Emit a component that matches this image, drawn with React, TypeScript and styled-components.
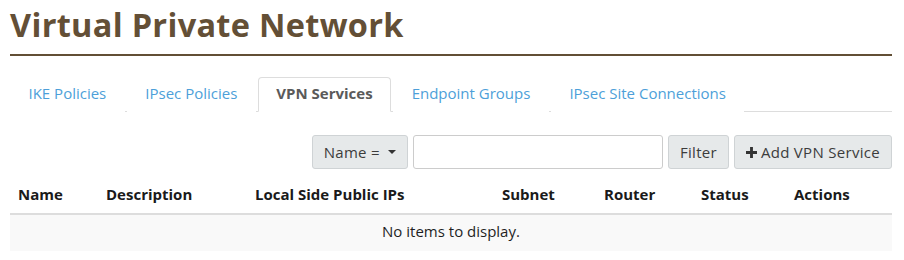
import React from "react";
import styled, { createGlobalStyle } from "styled-components";

const GlobalStyle = createGlobalStyle`
  body {
    margin: 0;
    background: #fff;
    font-family: "Open Sans", "DejaVu Sans", sans-serif;
    color: #1f1f1f;
  }
`;

const tabs = [
  "IKE Policies",
  "IPsec Policies",
  "VPN Services",
  "Endpoint Groups",
  "IPsec Site Connections",
];

const columns = [
  { label: "Name", width: 88 },
  { label: "Description", width: 149 },
  { label: "Local Side Public IPs", width: 247 },
  { label: "Subnet", width: 102 },
  { label: "Router", width: 97 },
  { label: "Status", width: 93 },
  { label: "Actions", width: 106 },
];

const App: React.FC = () => (
  <Page>
    <GlobalStyle />
    <Header>
      <Title>Virtual Private Network</Title>
    </Header>
    <TabList>
      {tabs.map((tab) => (
        <Tab key={tab} $active={tab === "VPN Services"}>
          {tab}
        </Tab>
      ))}
    </TabList>
    <Toolbar>
      <ToolButton type="button">
        Name = <Caret />
      </ToolButton>
      <SearchInput type="text" />
      <ToolButton type="button">Filter</ToolButton>
      <ToolButton type="button">
        <PlusIcon viewBox="0 0 10 10">
          <path d="M3.7 0h2.6v3.7H10v2.6H6.3V10H3.7V6.3H0V3.7h3.7z" />
        </PlusIcon>
        Add VPN Service
      </ToolButton>
    </Toolbar>
    <Table>
      <colgroup>
        {columns.map((col) => (
          <col key={col.label} style={{ width: col.width }} />
        ))}
      </colgroup>
      <thead>
        <tr>
          {columns.map((col) => (
            <HeadCell key={col.label}>{col.label}</HeadCell>
          ))}
        </tr>
      </thead>
      <tbody>
        <tr>
          <EmptyCell colSpan={columns.length}>No items to display.</EmptyCell>
        </tr>
      </tbody>
    </Table>
  </Page>
);

export default App;

const Page = styled.div`
  padding: 0 12px 0 10px;
`;

const Header = styled.div`
  border-bottom: 2px solid #624f35;
  padding: 5px 0 9px;
  margin-bottom: 21px;
`;

const Title = styled.h1`
  margin: 0;
  font-family: "Open Sans", sans-serif;
  font-weight: 700;
  font-size: 32.5px;
  line-height: 40px;
  color: #634f36;
  letter-spacing: 0.3px;
`;

const TabList = styled.ul`
  display: flex;
  list-style: none;
  margin: 0;
  padding: 0;
  border-bottom: 1px solid #dddddd;
  height: 34px;
`;

const Tab = styled.li<{ $active?: boolean }>`
  margin-right: 2px;
  margin-bottom: -1px;
  padding: 0 17.5px 3px;
  display: flex;
  align-items: center;
  font-size: 15px;
  color: ${(p) => (p.$active ? "#5a5a5a" : "#4d9fd9")};
  font-weight: ${(p) => (p.$active ? 700 : 400)};
  border: 1px solid ${(p) => (p.$active ? "#dddddd" : "transparent")};
  border-bottom-color: ${(p) => (p.$active ? "#fff" : "transparent")};
  border-radius: 4px 4px 0 0;
  background: #fff;
  cursor: pointer;
`;

const Toolbar = styled.div`
  display: flex;
  justify-content: flex-end;
  gap: 5px;
  margin-top: 23px;
  height: 34px;
`;

const ToolButton = styled.button`
  display: flex;
  align-items: center;
  gap: 4px;
  height: 34px;
  padding: 0 11px;
  border: 1px solid #cfd3d5;
  border-radius: 3px;
  background: #e6e9ea;
  color: #3c3c3c;
  font-family: "Open Sans", sans-serif;
  font-size: 15px;
  letter-spacing: 0.3px;
`;

const Caret = styled.span`
  width: 0;
  height: 0;
  margin-left: 4px;
  border-left: 4px solid transparent;
  border-right: 4px solid transparent;
  border-top: 4px solid #333;
`;

const PlusIcon = styled.svg`
  width: 11px;
  height: 11px;
  fill: #333;
`;

const SearchInput = styled.input`
  width: 250px;
  height: 34px;
  box-sizing: border-box;
  border: 1px solid #cccccc;
  border-radius: 3px;
  padding: 0 8px;
`;

const Table = styled.table`
  width: 882px;
  margin-top: 7px;
  border-collapse: collapse;
  table-layout: fixed;
  font-size: 15px;
`;

const HeadCell = styled.th`
  text-align: left;
  font-weight: 700;
  padding: 8px 8px 9px;
  height: 20px;
  color: #1a1a1a;
  border-bottom: 2px solid #dddddd;
  white-space: nowrap;
`;

const EmptyCell = styled.td`
  text-align: center;
  background: #f9f9f9;
  padding: 6px 8px 10px;
  height: 19px;
  color: #1f1f1f;
`;
